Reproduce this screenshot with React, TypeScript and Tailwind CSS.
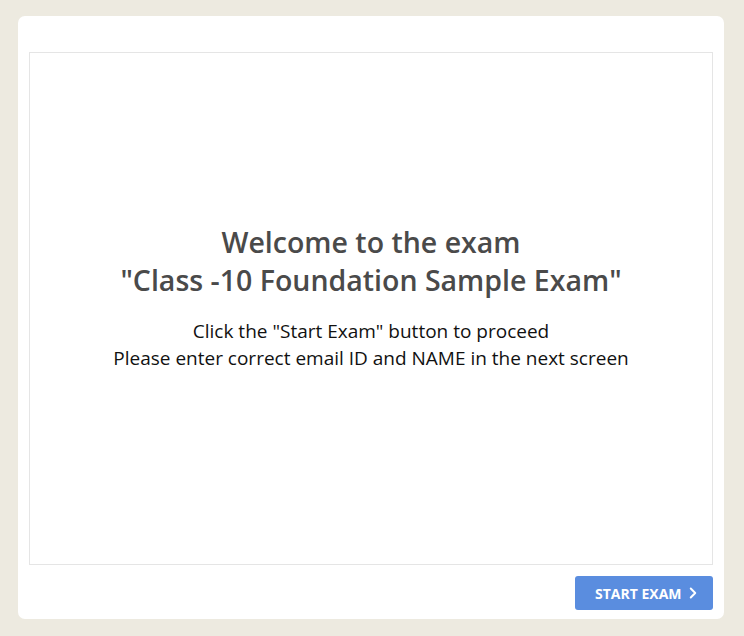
import { ChevronRight } from 'lucide-react'

export default function App() {
  return (
    <div
      className="h-[636px] w-[744px] bg-[#edeae0] pl-[18px] pr-[20px] pt-[16px] pb-[17px]"
      style={{ fontFamily: '"Open Sans", "Noto Sans", sans-serif' }}
    >
      <div className="flex h-full flex-col rounded-[7px] bg-white px-[11px] pt-[36px] pb-[9px]">
        {/* exam intro panel */}
        <div className="flex flex-1 flex-col items-center justify-center border border-[#e5e5e5] pb-[22px] text-center">
          <h1 className="text-[28.5px] font-semibold leading-[38px] text-[#4a4a4a]">
            Welcome to the exam
            <br />
            "Class -10 Foundation Sample Exam"
          </h1>
          <p className="mt-[19px] text-[19px] leading-[27px] text-[#111]">
            Click the "Start Exam" button to proceed
            <br />
            Please enter correct email ID and NAME in the next screen
          </p>
        </div>

        <div className="mt-[11px] flex justify-end">
          <button className="flex h-[34px] w-[138px] items-center rounded-[3px] bg-[#5a8ddf] pl-[20px] text-[14px] font-bold text-white">
            START EXAM
            <ChevronRight size={18} strokeWidth={2.6} className="ml-[2px]" />
          </button>
        </div>
      </div>
    </div>
  )
}
